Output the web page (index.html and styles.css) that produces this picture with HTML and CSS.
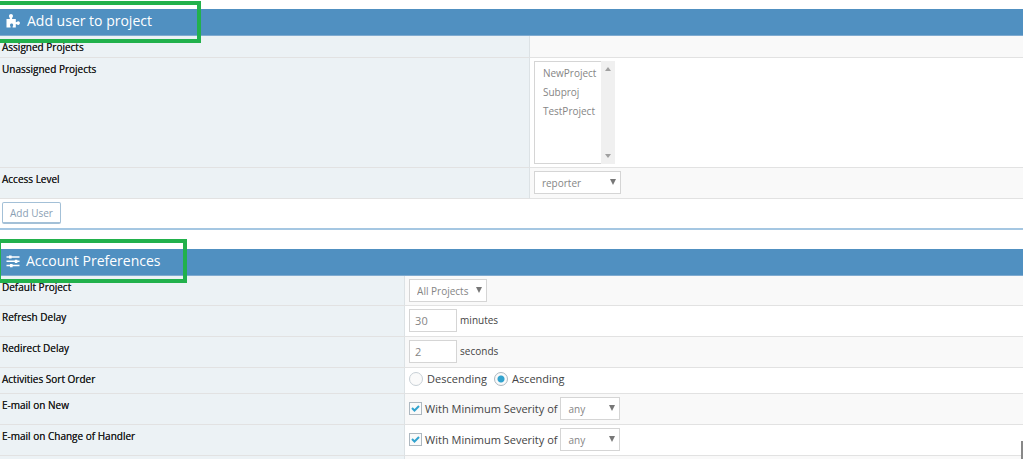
FILE: index.html
```html
<!DOCTYPE html>
<html lang="en">
<head>
<meta charset="utf-8">
<title>Manage User</title>
<link rel="stylesheet" href="styles.css">
</head>
<body>
<main class="page">
  <form class="widget widget-projects">
    <header class="widget-header">
      <svg class="icon" viewBox="0 0 14 14" aria-hidden="true"><path fill="currentColor" d="M.5 5h3.400C4.100 4 3 3.300 3 2 3 .8 3.900 0 5 0s2 .8 2 2c0 1.300-1.200 1.700-1 3h3.800v3.200c1 .2 1.300-.9 2.400-.9 1 0 1.700.8 1.700 1.800s-.7 1.900-1.700 1.900c-1.100 0-1.400-1.100-2.400-.9V13.500H6.600c-.2-1 .6-1.500.6-2.500 0-.9-.7-1.500-1.600-1.500S4 10.100 4 11c0 1 .8 1.500.6 2.500H.5z"/></svg>
      <h2 class="widget-title">Add user to project</h2>
    </header>
    <span class="highlight highlight-projects"></span>
    <table class="table table-projects">
      <tr class="row-short"><th scope="row">Assigned Projects</th><td></td></tr>
      <tr>
        <th scope="row"><label for="projects">Unassigned Projects</label></th>
        <td>
          <div class="list-box">
            <select id="projects" class="list" multiple size="5">
              <option>NewProject</option>
              <option>Subproj</option>
              <option>TestProject</option>
            </select>
            <div class="scrollbar" aria-hidden="true">
              <svg class="arrow" viewBox="0 0 6 4"><path d="M0 4h6L3 0z"/></svg>
              <svg class="arrow" viewBox="0 0 6 4"><path d="M0 0h6L3 4z"/></svg>
            </div>
          </div>
        </td>
      </tr>
      <tr>
        <th scope="row"><label for="access">Access Level</label></th>
        <td><select id="access" class="select select-access"><option>reporter</option></select></td>
      </tr>
    </table>
    <footer class="widget-footer"><button type="button" class="button">Add User</button></footer>
  </form>

  <form class="widget widget-preferences">
    <header class="widget-header">
      <svg class="icon" viewBox="0 0 14 14" aria-hidden="true"><path stroke="currentColor" stroke-width="1.500" d="M.5 3h13M.5 7.300h13M.5 11.600h13"/><path stroke="currentColor" stroke-width="3.200" d="M3 3h2.600M8.800 7.300h2.600M4 11.600h2.600"/></svg>
      <h2 class="widget-title">Account Preferences</h2>
    </header>
    <span class="highlight highlight-preferences"></span>
    <table class="table table-preferences">
      <tr class="row-first">
        <th scope="row"><label for="default-project">Default Project</label></th>
        <td><select id="default-project" class="select select-project"><option>All Projects</option></select></td>
      </tr>
      <tr>
        <th scope="row"><label for="refresh">Refresh Delay</label></th>
        <td><div class="field"><input id="refresh" class="input" type="text" value="30"><span class="unit">minutes</span></div></td>
      </tr>
      <tr>
        <th scope="row"><label for="redirect">Redirect Delay</label></th>
        <td><div class="field"><input id="redirect" class="input" type="text" value="2"><span class="unit">seconds</span></div></td>
      </tr>
      <tr class="row-radio">
        <th scope="row">Activities Sort Order</th>
        <td>
          <div class="field">
            <label class="choice choice-radio"><input class="radio" type="radio" name="order">Descending</label>
            <label class="choice choice-radio"><input class="radio" type="radio" name="order" checked>Ascending</label>
          </div>
        </td>
      </tr>
      <tr>
        <th scope="row">E-mail on New</th>
        <td>
          <div class="field">
            <label class="choice"><input class="check" type="checkbox" checked>With Minimum Severity of</label>
            <select class="select select-severity" aria-label="Severity for new"><option>any</option></select>
          </div>
        </td>
      </tr>
      <tr>
        <th scope="row">E-mail on Change of Handler</th>
        <td>
          <div class="field">
            <label class="choice"><input class="check" type="checkbox" checked>With Minimum Severity of</label>
            <select class="select select-severity" aria-label="Severity for change of handler"><option>any</option></select>
          </div>
        </td>
      </tr>
      <tr class="row-end"><th></th><td></td></tr>
    </table>
    <span class="scroll-mark"></span>
  </form>
</main>
</body>
</html>
```
FILE: styles.css
```css
* { box-sizing: border-box; }

body {
  margin: 0;
  background: #fff;
  color: #444;
  font: 11px/16px "Open Sans", sans-serif;
}

.page { padding: 9px 1px 0 0; }

.widget { position: relative; }
.widget-preferences { margin-top: 19px; }

.widget-header {
  display: flex;
  align-items: center;
  gap: 7px;
  height: 27px;
  padding: 0 0 2px 6px;
  border-bottom: 1px solid #80abd0;
  background: #5090c1;
  color: #fff;
}
.widget-preferences .widget-header { gap: 6px; }
.widget-title { margin: 0; font-size: 14px; font-weight: 400; line-height: 20px; }
.icon { width: 14px; height: 14px; }

.highlight {
  position: absolute;
  border: 4px solid #22b14c;
  border-left-width: 0;
  pointer-events: none;
}
.highlight-projects { left: 0; top: -8px; width: 201px; height: 42px; }
.highlight-preferences { left: 0; top: -10px; width: 187px; height: 44px; border-left-width: 1px; }

.table { width: 100%; border-collapse: separate; border-spacing: 0; table-layout: fixed; }
.table th, .table td {
  height: 31px;
  padding: 3px 4px;
  border-bottom: 1px solid #e2e2e2;
  text-align: left;
  vertical-align: top;
}
.table th {
  padding: 4px 2px 3px;
  border-right: 1px solid #dce2e5;
  background: #ecf2f5;
  color: #222;
  font-size: 10px;
  font-weight: 500;
  line-height: 14px;
  text-shadow: 0 0 0 #222;
}
.table tr:nth-child(odd) td { background: #f9f9f9; }
.table .row-short th, .table .row-short td { height: 22px; }
.table .row-first th, .table .row-first td { height: 30px; }
.table .row-radio th, .table .row-radio td { height: 26px; }
.table .row-end th, .table .row-end td { height: 3px; padding: 0; border-bottom: 0; }
.table-projects th { width: 51.8%; }
.table-preferences th { width: 39.6%; }

.select, .list, .input {
  display: block;
  margin: 0;
  border: 1px solid #d5d5d5;
  border-radius: 0;
  background-color: #fff;
  color: #858585;
  font: 10px/16px "Open Sans", sans-serif;
}
.select {
  height: 23px;
  padding: 2px 7px;
  appearance: none;
  background-image: url("data:image/svg+xml,%3Csvg xmlns='http://www.w3.org/2000/svg' viewBox='0 0 6 6'%3E%3Cpath fill='%23777' d='M0 0h6L3 6z'/%3E%3C/svg%3E");
  background-position: right 4px top 7px;
  background-repeat: no-repeat;
  background-size: 6px 6px;
}
.select-access { width: 87px; }
.select-project { width: 78px; }
.select-severity { width: 60px; }

.list-box { display: flex; width: 81px; height: 103px; }
.list { flex: 1; min-width: 0; height: 100%; padding: 3px 0; border-right: 0; overflow: hidden; }
.list option { height: 19px; padding: 1px 8px; }
.scrollbar {
  display: flex;
  flex-direction: column;
  align-items: center;
  justify-content: space-between;
  width: 14px;
  padding: 6px 0;
  background: #f0f0f0;
}
.arrow { width: 6px; height: 4px; fill: #a0a0a0; }

.field { display: flex; align-items: center; gap: 3px; }
.input { width: 48px; height: 23px; padding: 2px 5px; font-size: 11px; }
.unit { padding-bottom: 2px; font-size: 10px; }

.choice { display: flex; align-items: center; gap: 3px; }
.choice-radio { gap: 4px; margin-right: 4px; }

.radio, .check {
  appearance: none;
  margin: 0;
  border: 1px solid #c8d0d6;
  background: #fafafa center no-repeat;
}
.radio { width: 14px; height: 14px; border-radius: 50%; }
.radio:checked { border-color: #adb8c0; background-image: radial-gradient(circle, #32a3ce 3px, transparent 4px); }
.check { width: 13px; height: 13px; }
.check:checked {
  border-color: #adb8c0;
  background-image: url("data:image/svg+xml,%3Csvg xmlns='http://www.w3.org/2000/svg' viewBox='0 0 11 11'%3E%3Cpath fill='none' stroke='%2332a3ce' stroke-width='2' d='M2 5l2.500 2.500L9 3'/%3E%3C/svg%3E");
}

.widget-footer { height: 31px; padding: 3px 2px; border-bottom: 2px solid #a5c7e2; }
.button {
  display: block;
  height: 22px;
  padding: 0 7px;
  border: 1px solid #a3c0d7;
  border-bottom-width: 2px;
  border-radius: 2px;
  background: #fff;
  color: #8aa0b4;
  font: 10px/18px "Open Sans", sans-serif;
}

.scroll-mark {
  position: absolute;
  right: 0;
  bottom: 0;
  width: 2px;
  height: 18px;
  background: #888;
}
```
